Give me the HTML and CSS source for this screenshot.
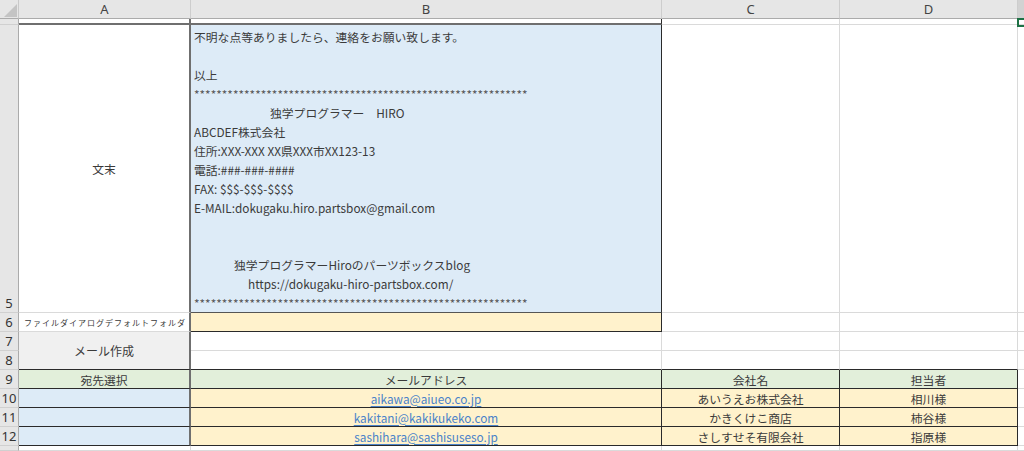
FILE: index.html
```html
<!DOCTYPE html>
<html lang="ja">
<head>
<meta charset="utf-8">
<title>Sheet</title>
<link rel="stylesheet" href="styles.css">
</head>
<body>
<div class="sheet">
  <div class="corner"><svg width="19" height="19" viewBox="0 0 19 19"><polygon points="17,4 17,17 4,17" fill="#c4c4c4"/></svg></div>
  <div class="ch">A</div>
  <div class="ch">B</div>
  <div class="ch">C</div>
  <div class="ch">D</div>
  <div class="ch ch-sel"></div>

  <!-- row 4 (partial) -->
  <div class="rh"></div>
  <div class="c colA gb2"></div>
  <div class="c colB gb2"></div>
  <div class="c"></div>
  <div class="c"></div>
  <div class="c e"></div>

  <!-- row 5 -->
  <div class="rh">5</div>
  <div class="c colA">文末</div>
  <div class="c colB blue db note">
    <div class="ln">不明な点等ありましたら、連絡をお願い致します。</div>
    <div class="ln"></div>
    <div class="ln">以上</div>
    <div class="ln stars">************************************************************</div>
    <div class="ln ind1">独学プログラマー　HIRO</div>
    <div class="ln">ABCDEF株式会社</div>
    <div class="ln">住所:XXX-XXX XX県XXX市XX123-13</div>
    <div class="ln">電話:###-###-####</div>
    <div class="ln">FAX: $$$-$$$-$$$$</div>
    <div class="ln">E-MAIL:dokugaku.hiro.partsbox@gmail.com</div>
    <div class="ln"></div>
    <div class="ln"></div>
    <div class="ln ind2">独学プログラマーHiroのパーツボックスblog</div>
    <div class="ln ind3">https://dokugaku-hiro-partsbox.com/</div>
    <div class="ln stars">************************************************************</div>
  </div>
  <div class="c"></div>
  <div class="c"></div>
  <div class="c e"></div>

  <!-- row 6 -->
  <div class="rh">6</div>
  <div class="c colA tiny">ファイルダイアログデフォルトフォルダ</div>
  <div class="c colB yellow db"></div>
  <div class="c"></div>
  <div class="c"></div>
  <div class="c e"></div>

  <!-- rows 7-8 -->
  <div class="rh">7</div>
  <div class="c colA button">メール作成</div>
  <div class="c"></div>
  <div class="c"></div>
  <div class="c"></div>
  <div class="c e"></div>

  <div class="rh">8</div>
  <div class="c db"></div>
  <div class="c db"></div>
  <div class="c db"></div>
  <div class="c e"></div>

  <!-- row 9 -->
  <div class="rh">9</div>
  <div class="c colA green db">宛先選択</div>
  <div class="c colB green db">メールアドレス</div>
  <div class="c green db dr">会社名</div>
  <div class="c green db dr">担当者</div>
  <div class="c e"></div>

  <!-- row 10 -->
  <div class="rh">10</div>
  <div class="c colA blue db"></div>
  <div class="c colB yellow db"><span class="link">aikawa@aiueo.co.jp</span></div>
  <div class="c yellow db dr">あいうえお株式会社</div>
  <div class="c yellow db dr">相川様</div>
  <div class="c e"></div>

  <!-- row 11 -->
  <div class="rh">11</div>
  <div class="c colA blue db"></div>
  <div class="c colB yellow db"><span class="link">kakitani@kakikukeko.com</span></div>
  <div class="c yellow db dr">かきくけこ商店</div>
  <div class="c yellow db dr">柿谷様</div>
  <div class="c e"></div>

  <!-- row 12 -->
  <div class="rh">12</div>
  <div class="c colA blue db"></div>
  <div class="c colB yellow db"><span class="link">sashihara@sashisuseso.jp</span></div>
  <div class="c yellow db dr">さしすせそ有限会社</div>
  <div class="c yellow db dr">指原様</div>
  <div class="c e"></div>

  <!-- row 13 (partial) -->
  <div class="rh"></div>
  <div class="c"></div>
  <div class="c"></div>
  <div class="c"></div>
  <div class="c"></div>
  <div class="c e"></div>

  <div class="selbox"></div>
</div>
</body>
</html>
```

FILE: styles.css
```css
html, body {
  margin: 0;
  padding: 0;
  background: #ffffff;
  overflow: hidden;
}

.sheet {
  position: relative;
  width: 1024px;
  height: 451px;
  display: grid;
  grid-template-columns: 19px 172px 471px 178px 178px 6px;
  grid-template-rows: 19px 6px 288px repeat(7, 19px) 5px;
  font-family: "Noto Sans CJK JP", "Noto Sans", sans-serif;
  font-size: 11.8px;
  color: #3a3a3a;
  overflow: hidden;
}

.corner {
  background: #e6e6e6;
  border-right: 1px solid #c9c9c9;
  border-bottom: 1px solid #ababab;
  box-sizing: border-box;
}

.corner svg {
  display: block;
}

.ch {
  background: #e6e6e6;
  border-right: 1px solid #cdcdcd;
  border-bottom: 1px solid #ababab;
  box-sizing: border-box;
  display: flex;
  align-items: center;
  justify-content: center;
  font-family: "Noto Sans", sans-serif;
  font-size: 13px;
  color: #444444;
}

.ch-sel {
  background: #d2d2d2;
  border-right: none;
}

.rh {
  background: #e6e6e6;
  border-right: 1px solid #ababab;
  border-bottom: 1px solid #d0d0d0;
  box-sizing: border-box;
  display: flex;
  align-items: flex-end;
  justify-content: center;
  font-family: "Noto Sans", sans-serif;
  font-size: 13px;
  line-height: 17px;
  color: #333333;
}

.c {
  border-right: 1px solid #dadada;
  border-bottom: 1px solid #dadada;
  box-sizing: border-box;
  display: flex;
  align-items: center;
  justify-content: center;
  white-space: nowrap;
  overflow: hidden;
}

.e {
  border-right: none;
}

.colA {
  border-right: 2px solid #6f6f6f;
}

.colB {
  border-right: 1px solid #2a2a2a;
}

.gb2 {
  border-bottom: 2px solid #6f6f6f;
}

.db {
  border-bottom: 1px solid #2a2a2a;
}

.dr {
  border-right: 1px solid #2a2a2a;
}

.blue {
  background: #ddebf7;
}

.yellow {
  background: #fff2cc;
}

.green {
  background: #e2efda;
}

.note {
  flex-direction: column;
  align-items: stretch;
  justify-content: flex-start;
  padding: 2px 0 0 3px;
  border-bottom-color: #555555;
}

.ln {
  height: 19px;
  line-height: 19px;
  white-space: pre;
}

.ind1 {
  padding-left: 76px;
}

.ind2 {
  padding-left: 40px;
}

.ind3 {
  padding-left: 54px;
}

.stars {
  font-size: 11.8px;
  letter-spacing: 0.05px;
  color: #555555;
}

.tiny {
  font-size: 8px;
  letter-spacing: 1px;
  justify-content: flex-start;
  padding-left: 5px;
}

.button {
  grid-row: span 2;
  background: #f0f0f0;
  border-bottom: 1px solid #2a2a2a;
  font-size: 12px;
}

.link {
  color: #4a82c9;
  text-decoration: underline;
  text-underline-offset: 2px;
}

.selbox {
  position: absolute;
  left: 1017px;
  top: 18px;
  width: 12px;
  height: 9px;
  border: 2px solid #1e7145;
  box-sizing: border-box;
}
```
